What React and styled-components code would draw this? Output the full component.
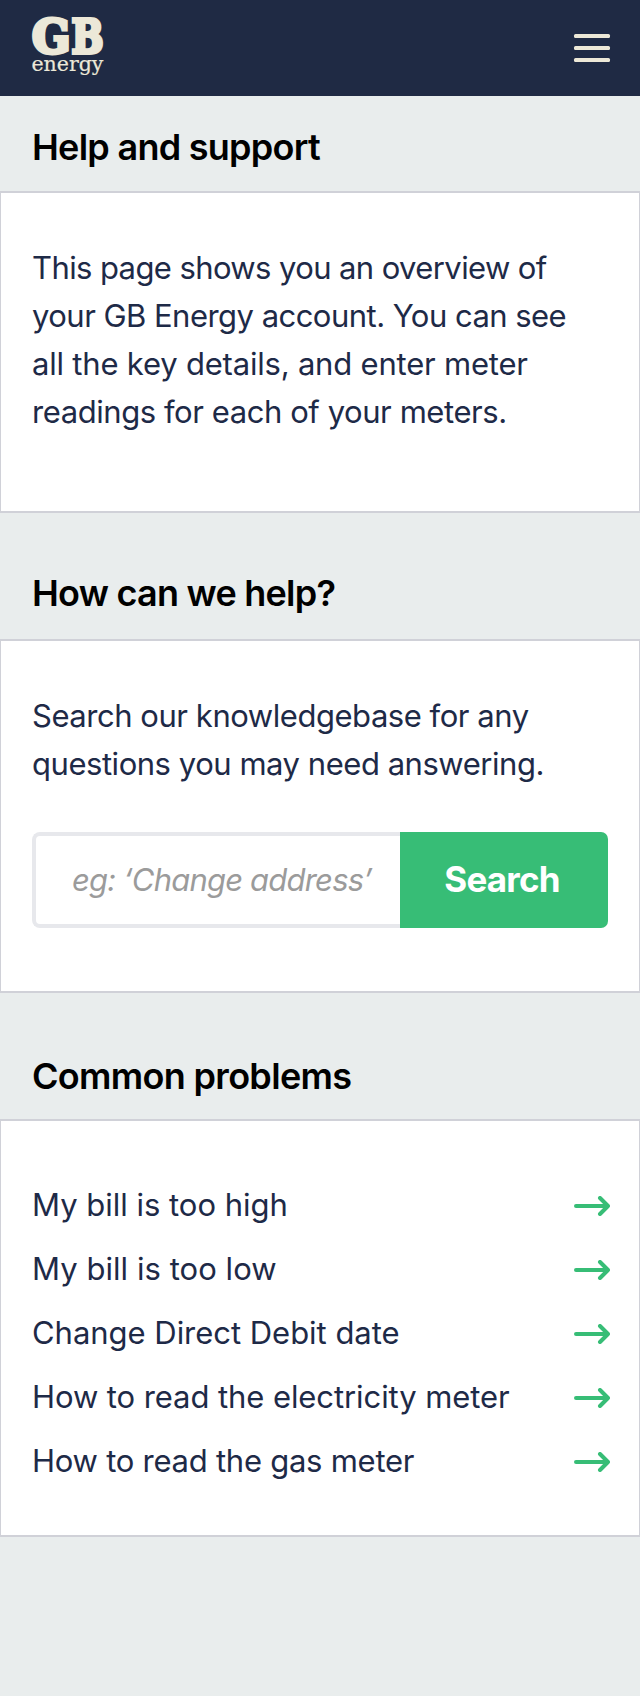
import React from "react";
import styled, { createGlobalStyle } from "styled-components";

const GlobalStyle = createGlobalStyle`
  *, *::before, *::after { box-sizing: border-box; }
  body {
    margin: 0;
    background: #e9eded;
    color: #1e2a47;
    font-family: Inter, "Liberation Sans", sans-serif;
  }
`;

const Page = styled.div`
  display: flex;
  flex-direction: column;
  min-height: 1696px;
  background: #e9eded;
`;

const Header = styled.header`
  display: flex;
  align-items: center;
  justify-content: space-between;
  height: 96px;
  padding: 0 30px 0 32px;
  background: #1f2a44;
`;

const LogoMark = styled.svg`
  display: block;
  width: 74px;
  height: 64px;
  overflow: visible;
  fill: #ece8d8;
  stroke: #ece8d8;
  font-family: "DejaVu Serif", serif;
`;

const MenuButton = styled.button`
  display: flex;
  flex-direction: column;
  gap: 8px;
  width: 36px;
  padding: 0;
  border: 0;
  background: none;
`;

const MenuBar = styled.span`
  height: 4px;
  border-radius: 1.5px;
  background: #ece8d7;
`;

const SectionTitle = styled.h2`
  display: flex;
  align-items: flex-end;
  height: ${(p) => p.$height}px;
  margin: 0;
  padding: 0 32px ${(p) => p.$bottom}px;
  color: #000;
  font-size: 36px;
  font-weight: 600;
  line-height: 40px;
  letter-spacing: ${(p) => p.$tracking}px;
`;

const Panel = styled.section`
  border: solid #d0d1d8;
  border-width: 2px 1px;
  background: #fff;
  padding: ${(p) => p.$padding};
`;

const Copy = styled.p`
  margin: 0;
  font-size: 31px;
  line-height: 48px;
`;

const Line = styled.span`
  display: block;
  white-space: nowrap;
  letter-spacing: ${(p) => p.$tracking}px;
`;

const SearchForm = styled.form`
  display: flex;
  height: 96px;
  margin-top: 44px;
`;

const SearchInput = styled.input`
  width: 368px;
  height: 96px;
  padding: 0 0 2px 36px;
  border: 4px solid #e7e8ec;
  border-right: 0;
  border-radius: 8px 0 0 8px;
  outline: 0;
  background: #fff;
  color: #1e2a47;
  font: italic 400 31px Inter, sans-serif;
  letter-spacing: -0.8px;

  &::placeholder {
    color: #9b9b9b;
    opacity: 1;
  }
`;

const SearchButton = styled.button`
  flex: 1;
  padding: 0 4px 3px 0;
  border: 0;
  border-radius: 0 7px 7px 0;
  background: #37bd76;
  color: #fff;
  font: 700 35px Inter, sans-serif;
  letter-spacing: -0.8px;
`;

const ProblemList = styled.ul`
  margin: 0;
  padding: 0;
  list-style: none;
`;

const Problem = styled.li`
  display: flex;
  align-items: center;
  justify-content: space-between;
  height: 64px;
  font-size: 31px;
  line-height: 64px;
`;

const ArrowIcon = styled.svg`
  display: block;
  width: 36px;
  height: 20px;
  margin-top: 2px;
  fill: none;
  stroke: #37bd76;
  stroke-width: 4;
  stroke-linecap: round;
  stroke-linejoin: round;
`;

const intro = [
  ["This page shows you an overview of", -0.6],
  ["your GB Energy account. You can see", -0.53],
  ["all the key details, and enter meter", -0.2],
  ["readings for each of your meters.", -0.43],
];

const searchIntro = [
  ["Search our knowledgebase for any", -0.46],
  ["questions you may need answering.", -0.46],
];

const problems = [
  ["My bill is too high", -0.01],
  ["My bill is too low", 0.05],
  ["Change Direct Debit date", -0.03],
  ["How to read the electricity meter", -0.08],
  ["How to read the gas meter", -0.25],
];

function Logo() {
  return (
    <LogoMark viewBox="0 0 74 64" role="img" aria-label="GB energy">
      <g strokeWidth="3.8" fontWeight="700" fontSize="47">
        <text x="0" y="37.1" textLength="38.5" lengthAdjust="spacingAndGlyphs">G</text>
        <text x="39.6" y="37.1" textLength="32" lengthAdjust="spacingAndGlyphs">B</text>
      </g>
      <text x="-0.6" y="55" fontSize="20" strokeWidth="0.2" textLength="72" lengthAdjust="spacingAndGlyphs">
        energy
      </text>
    </LogoMark>
  );
}

function Arrow() {
  return (
    <ArrowIcon viewBox="0 0 36 20" aria-hidden="true">
      <path d="M2 10H34M26 2L34 10L26 18" />
    </ArrowIcon>
  );
}

function Lines({ items }) {
  return (
    <Copy>
      {items.map(([text, tracking]) => (
        <Line key={text} $tracking={tracking}>{text}</Line>
      ))}
    </Copy>
  );
}

export default function App() {
  return (
    <Page>
      <GlobalStyle />
      <Header>
        <Logo />
        <MenuButton aria-label="Menu">
          <MenuBar />
          <MenuBar />
          <MenuBar />
        </MenuButton>
      </Header>

      <SectionTitle $height={95} $bottom={24} $tracking={-0.73}>Help and support</SectionTitle>
      <Panel $padding="51px 31px 75px">
        <Lines items={intro} />
      </Panel>

      <SectionTitle $height={126} $bottom={26} $tracking={-0.76}>How can we help?</SectionTitle>
      <Panel $padding="51px 31px 63px">
        <Lines items={searchIntro} />
        <SearchForm onSubmit={(e) => e.preventDefault()}>
          <SearchInput placeholder="eg: ‘Change address’" aria-label="Search the knowledgebase" />
          <SearchButton type="submit">Search</SearchButton>
        </SearchForm>
      </Panel>

      <SectionTitle $height={126} $bottom={23} $tracking={-0.68}>Common problems</SectionTitle>
      <Panel $padding="52px 29px 42px 31px">
        <ProblemList>
          {problems.map(([text, tracking]) => (
            <Problem key={text}>
              <Line $tracking={tracking}>{text}</Line>
              <Arrow />
            </Problem>
          ))}
        </ProblemList>
      </Panel>
    </Page>
  );
}
